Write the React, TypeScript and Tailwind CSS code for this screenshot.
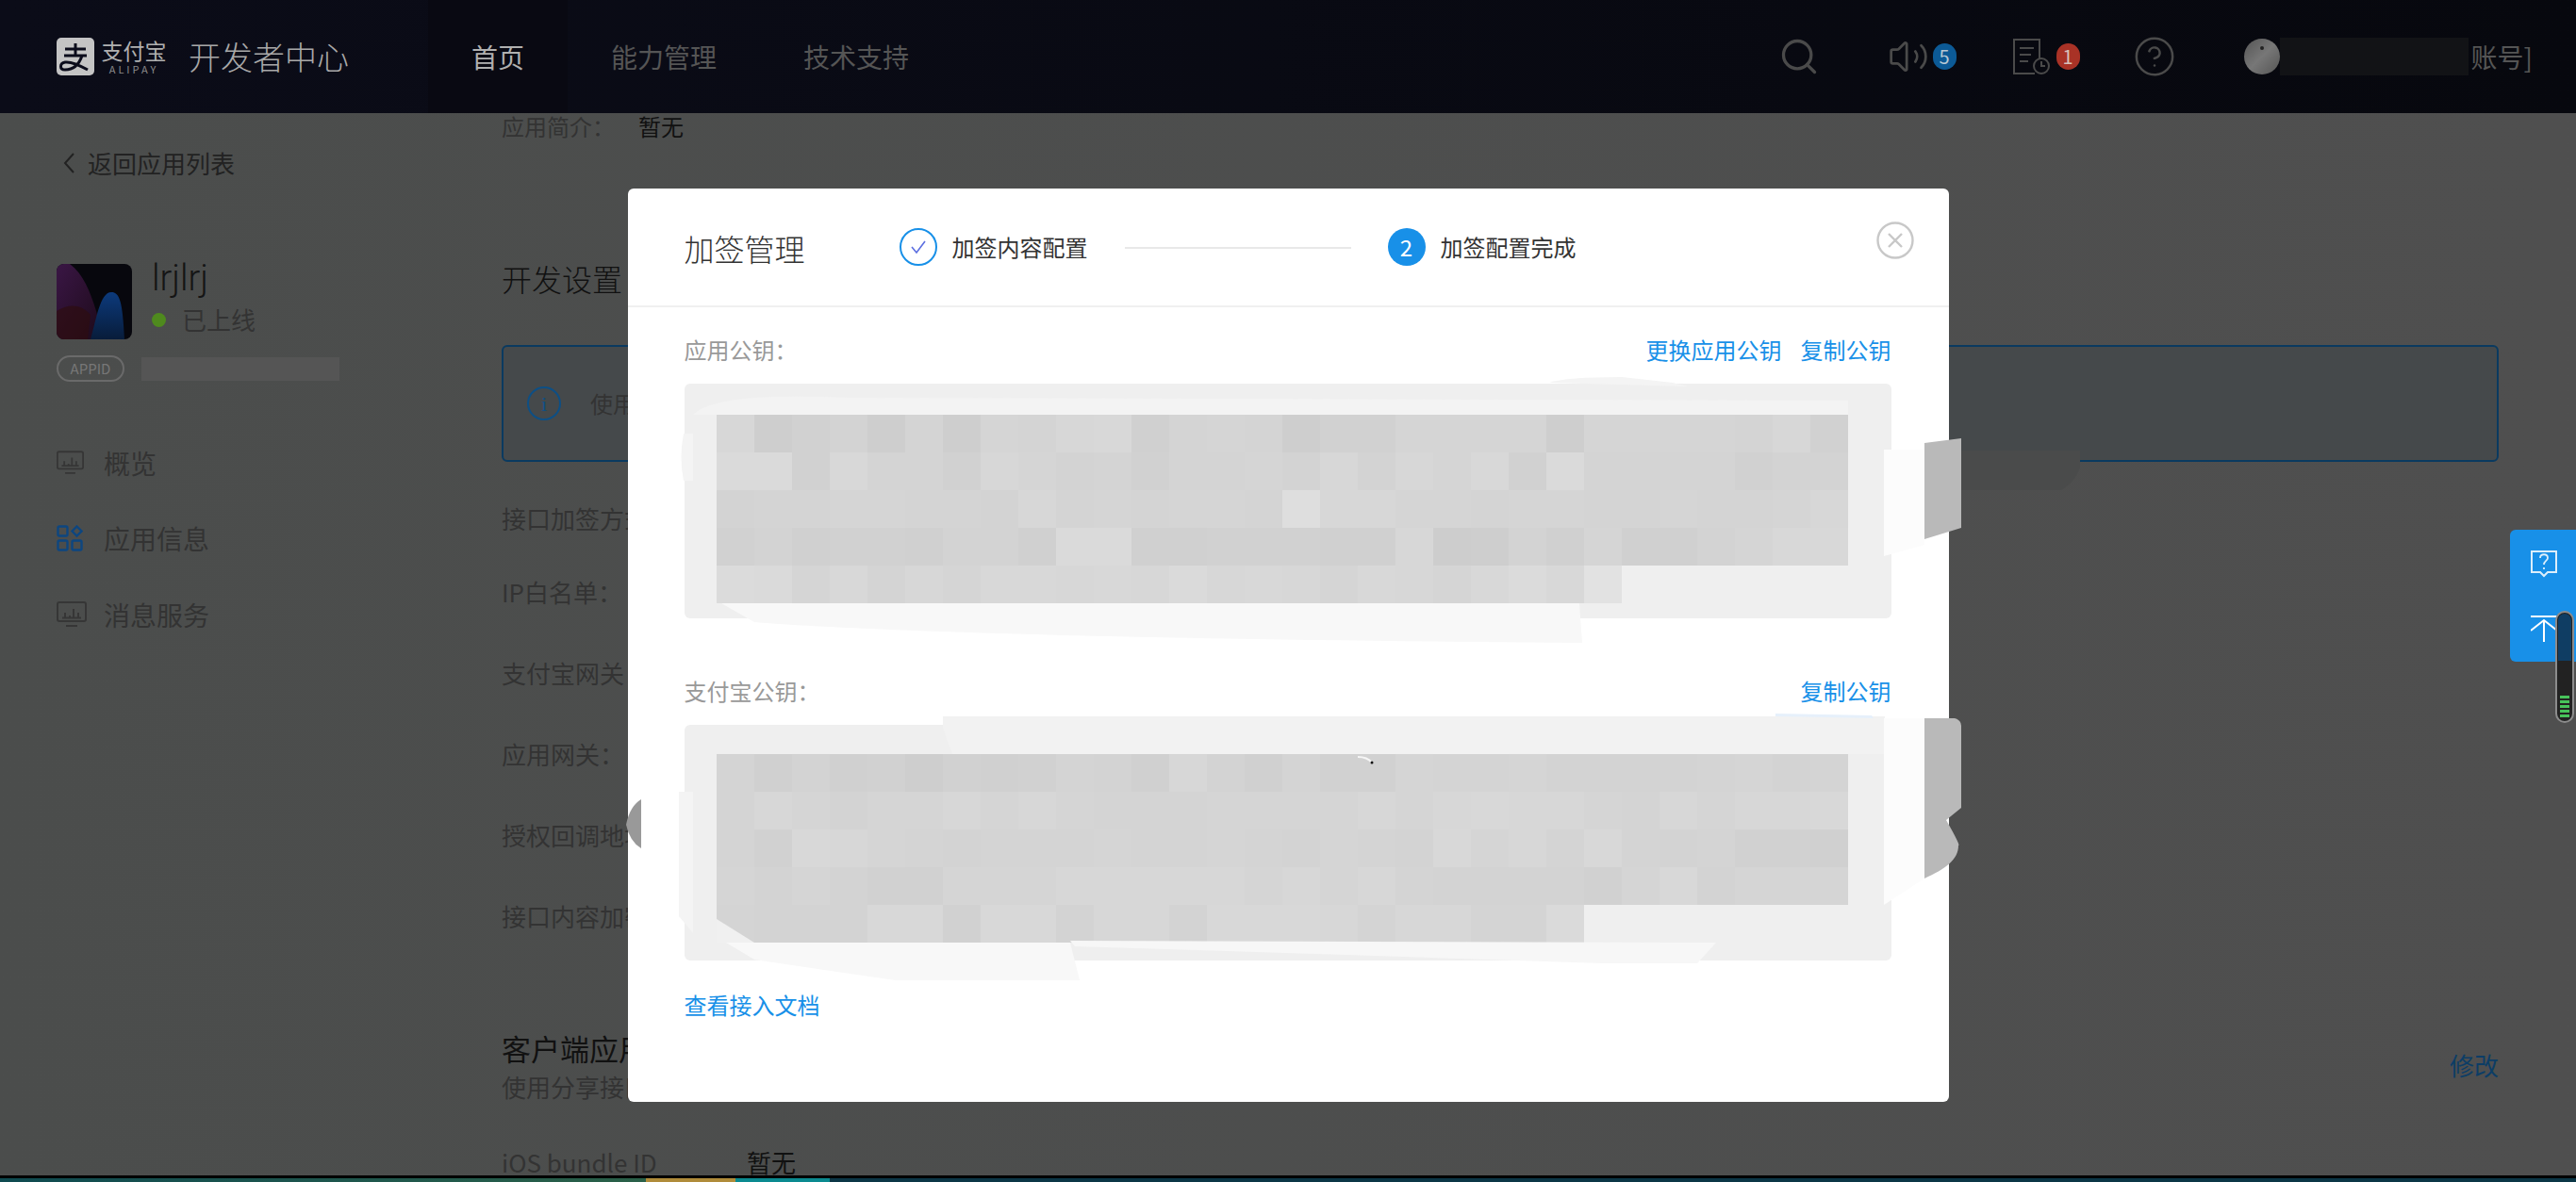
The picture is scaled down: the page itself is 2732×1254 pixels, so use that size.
import { Search, Volume2, CircleHelp } from "lucide-react";

const box1 = [
  "713415165782565133666616666573",
  "993855376453556474768395555344",
  "455665547565665c77665665565567",
  "342332442992233322701426224688",
  "a96857688787978768768a8f",
];
const box2 = [
  "524231323542742533655644445645",
  "576466767655566667678776576778",
  "538765455565565465486758545332",
  "646433666777776767544443684666",
  "54448838847748887577559",
];

function Mosaic({ rows }: { rows: string[] }) {
  return (
    <div className="grid grid-cols-[repeat(30,40px)] auto-rows-[40px]">
      {rows.flatMap((row, r) =>
        row.split("").map((c, i) => {
          const v = Math.round(0xcd + parseInt(c, 16) * 1.4);
          return <div key={r + "-" + i} style={{ backgroundColor: `rgb(${v},${v},${v})` }} />;
        })
      )}
    </div>
  );
}

function PulseIcon({ w, h }: { w: number; h: number }) {
  return (
    <svg width={w} height={h} viewBox="0 0 32 28" fill="none" stroke="#363636" strokeWidth="2">
      <rect x="1" y="1" width="30" height="20" rx="2" />
      <path d="M9 17v-5M14 17v-2M18 17V8M23 17v-5M6 17.5h20M10 26h12" />
    </svg>
  );
}

function Row({ label, className = "" }: { label: string; className?: string }) {
  return <div className={`h-[30px] flex items-center text-[26px] leading-none text-[#333] whitespace-nowrap ${className}`}>{label}</div>;
}

function Step({ n, label }: { n?: number; label: string }) {
  return (
    <div className="flex items-center">
      {n ? (
        <div className="w-10 h-10 rounded-full bg-[#1890e8] text-white text-2xl flex items-center justify-center">{n}</div>
      ) : (
        <div className="w-10 h-10 rounded-full border-2 border-[#1890e8] flex items-center justify-center">
          <svg width="20" height="20" viewBox="0 0 20 20" fill="none" stroke="#5b6ee0" strokeWidth="1.6">
            <path d="M3 10l5 6 9-12" />
          </svg>
        </div>
      )}
      <span className="ml-4 text-2xl text-[#333] leading-none">{label}</span>
    </div>
  );
}

export default function App() {
  return (
    <div className="relative h-screen w-full overflow-hidden flex flex-col bg-gradient-to-r from-[#4b4d4c] to-[#4f4f4f] font-['Noto_Sans_CJK_SC','Liberation_Sans',sans-serif]">
      <header className="relative z-10 h-[120px] shrink-0 flex bg-gradient-to-r from-[#0b0c18] to-[#07080e] pl-[60px]">
        <div className="w-[394px] flex items-center">
          <svg width="40" height="40" viewBox="0 0 40 40" className="shrink-0">
            <rect width="40" height="40" rx="5" fill="#c4c4c4" />
            <path d="M9 12h22M20 6v12M8 19h24M27 19c-3 9-9 15-18 15-6 0-6-7 0-8 7-1 15 3 24 8" fill="none" stroke="#0b0c1b" strokeWidth="3" />
          </svg>
          <div className="ml-[7px] w-[70px] flex flex-col items-center text-[#b0b0b0]">
            <span className="text-[23px] leading-[24px] whitespace-nowrap">支付宝</span>
            <span className="text-[11px] leading-[12px] tracking-[3px] mt-[2px] text-[#8a8a8a]">ALIPAY</span>
          </div>
          <span className="ml-[23px] text-[34px] leading-none text-[#a8a8a8] font-light whitespace-nowrap">开发者中心</span>
        </div>
        <nav className="flex text-[28px]">
          <a className="px-[46px] flex items-center bg-[#090912] text-[#b0b0b0]">首页</a>
          <a className="px-[46px] flex items-center text-[#555]">能力管理</a>
          <a className="px-[46px] flex items-center text-[#555]">技术支持</a>
        </nav>
        <div className="ml-auto pr-[46px] flex items-center text-[#555]">
          <Search size={44} strokeWidth={1.8} className="text-[#4a4a4a]" />
          <Volume2 size={44} strokeWidth={1.5} className="ml-[72px] text-[#4a4a4a]" />
          <span className="ml-[4px] w-[25px] h-[28px] rounded-full bg-[#0c5a96] text-[#b8c8d4] text-[20px] flex items-center justify-center">5</span>
          <svg width="42" height="40" viewBox="0 0 42 40" fill="none" stroke="#4a4a4a" strokeWidth="2" className="ml-[59px]">
            <path d="M24 38H2V2h27v20M8 11h15M8 18h12M8 25h9" />
            <circle cx="31" cy="30" r="8" />
            <path d="M31 25v5h4" />
          </svg>
          <span className="ml-[5px] w-[25px] h-[28px] rounded-full bg-[#a93226] text-[#d8c0b8] text-[20px] flex items-center justify-center">1</span>
          <CircleHelp size={46} strokeWidth={1.3} className="ml-[56px] text-[#4a4a4a]" />
          <div className="ml-[72px] w-[38px] h-[38px] rounded-full bg-gradient-to-br from-[#555] via-[#777] to-[#555] flex items-start justify-center pt-2">
            <div className="w-[4px] h-[4px] rounded-full bg-[#222]" />
          </div>
          <div className="w-[200px] h-10 bg-[#121316]" />
          <span className="ml-[3px] text-[28px] leading-none whitespace-nowrap">账号]</span>
        </div>
      </header>

      <div className="flex-1 min-h-0 flex">
        <aside className="w-[532px] shrink-0 pl-[60px]">
          <div className="mt-[38px] h-[30px] flex items-center text-[26px] leading-none text-[#222]">
            <svg width="14" height="22" viewBox="0 0 14 22" fill="none" stroke="#222" strokeWidth="2" className="ml-[6px]">
              <path d="M12 1L3 11l9 10" />
            </svg>
            <span className="ml-[13px]">返回应用列表</span>
          </div>
          <div className="mt-[92px] flex">
            <svg width="80" height="80" viewBox="0 0 80 80" className="rounded-lg shrink-0">
              <defs>
                <linearGradient id="ap" x1="0" y1="0" x2="1" y2="1">
                  <stop offset="0" stopColor="#3a1645" />
                  <stop offset="1" stopColor="#1c0a18" />
                </linearGradient>
                <linearGradient id="bl" x1="0" y1="0" x2="0" y2="1">
                  <stop offset="0" stopColor="#0c3a7c" />
                  <stop offset="1" stopColor="#081c3a" />
                </linearGradient>
              </defs>
              <rect width="80" height="80" fill="#07070d" />
              <path d="M0 0h14c14 10 22 30 28 50 3 12 6 22 8 30H0z" fill="url(#ap)" />
              <path d="M36 80c6-20 10-50 22-50 9 0 12 10 14 50z" fill="url(#bl)" />
              <path d="M0 50c12-8 26-8 36 4l-3 26H0z" fill="#2e0d10" opacity="0.7" />
            </svg>
            <div className="ml-[21px] -mt-[5px]">
              <div className="text-[38px] leading-[40px] text-[#151515] font-light font-['Roboto',sans-serif]">lrjlrj</div>
              <div className="mt-[11px] flex items-center text-[26px] leading-[26px] text-[#333]">
                <span className="w-[15px] h-[15px] rounded-full bg-[#4f8a1e]" />
                <span className="ml-[17px]">已上线</span>
              </div>
            </div>
          </div>
          <div className="mt-[17px] flex items-center">
            <span className="w-[72px] h-[28px] rounded-full border-2 border-[#6a6a6a] text-[15px] text-[#777] flex items-center justify-center">APPID</span>
            <div className="ml-[18px] w-[210px] h-[25px] bg-[#555]" />
          </div>
          <div className="mt-[71px] h-[30px] flex items-center text-[28px] text-[#333]">
            <span className="w-[50px]"><PulseIcon w={29} h={26} /></span>概览
          </div>
          <div className="mt-[50px] h-[30px] flex items-center text-[28px] text-[#333]">
            <span className="w-[50px]">
              <svg width="28" height="28" viewBox="0 0 28 28" fill="none" stroke="#0d4680" strokeWidth="2.4">
                <rect x="1.5" y="1.5" width="10" height="10" rx="1.5" />
                <rect x="1.5" y="16.5" width="10" height="10" rx="1.5" />
                <rect x="16.5" y="16.5" width="10" height="10" rx="1.5" />
                <path d="M21.5 1.5l5 5-5 5-5-5z" />
              </svg>
            </span>
            应用信息
          </div>
          <div className="mt-[51px] h-[30px] flex items-center text-[28px] text-[#333]">
            <span className="w-[50px]"><PulseIcon w={32} h={28} /></span>消息服务
          </div>
        </aside>

        <main className="flex-1 pr-[82px] flex flex-col">
          <div className="h-[28px] shrink-0 flex items-center text-2xl leading-none whitespace-nowrap">
            <span className="w-[145px] text-[#333]">应用简介：</span>
            <span className="text-[#111]">暂无</span>
          </div>
          <div className="mt-[127px] h-10 flex items-center text-[32px] text-[#111] font-light whitespace-nowrap">开发设置</div>
          <div className="mt-[51px] h-[124px] shrink-0 rounded-md border-2 border-[#0a3a60] bg-[#45494b] pl-[25px] flex items-center">
            <span className="w-9 h-9 rounded-full border-2 border-[#0d4f85] text-[#0d4f85] text-[22px] flex items-center justify-center font-['Liberation_Serif',serif]">i</span>
            <span className="ml-[31px] text-2xl text-[#333] whitespace-nowrap">使用前请先完成配置</span>
          </div>
          <Row label="接口加签方式：" className="mt-[45px]" />
          <Row label="IP白名单：" className="mt-[48px]" />
          <Row label="支付宝网关：" className="mt-[56px]" />
          <Row label="应用网关：" className="mt-[56px]" />
          <Row label="授权回调地址：" className="mt-[56px]" />
          <Row label="接口内容加密：" className="mt-[56px]" />
          <div className="mt-[105px] h-10 flex items-center text-[31px] text-[#111] whitespace-nowrap">
            <span>客户端应用</span>
          </div>
          <div className="mt-[6px] h-[30px] flex items-center justify-between text-[26px] leading-none whitespace-nowrap">
            <span className="text-[#333]">使用分享接口</span>
            <span className="text-[#0c3d66] -mt-[46px]">修改</span>
          </div>
          <div className="mt-[51px] h-[28px] shrink-0 flex items-center text-[26px] leading-none whitespace-nowrap">
            <span className="w-[260px] text-[#333]">iOS bundle ID</span>
            <span className="text-[#111]">暂无</span>
          </div>
        </main>
      </div>

      <div className="h-[7px] shrink-0 border-t-[3px] border-black flex relative z-10">
        <div className="w-[685px] bg-gradient-to-r from-[#0e4a50] to-[#2a6048]" />
        <div className="w-[95px] bg-[#b08c3a]" />
        <div className="w-[100px] bg-[#0a8a90]" />
        <div className="flex-1 bg-[#0b3646]" />
      </div>

      <div className="absolute z-20 inset-0 flex items-start justify-center pt-[200px]">
        <div className="relative w-[1401px] h-[969px] bg-white rounded-md">
          <div className="h-[126px] border-b-2 border-[#f0f0f0] pl-[60px] pt-[42px] flex items-start">
            <span className="mt-[1px] w-[228px] text-[32px] leading-10 text-[#333] font-light">加签管理</span>
            <Step label="加签内容配置" />
            <div className="mx-[39px] mt-[20px] w-[240px] h-[2px] bg-[#e8e8e8]" />
            <Step n={2} label="加签配置完成" />
          </div>
          <svg width="40" height="40" viewBox="0 0 40 40" fill="none" stroke="#c8c8c8" strokeWidth="2.4" className="absolute right-[37px] top-[35px]">
            <circle cx="20" cy="20" r="18.5" />
            <path d="M13 13l14 14M27 13L13 27" />
          </svg>
          <div className="pr-[61px] pl-[60px]">
            <div className="mt-[30px] h-[30px] flex items-center justify-between text-2xl">
              <span className="text-[#999]">应用公钥：</span>
              <span className="flex gap-5 text-[#1890e8]">
                <a>更换应用公钥</a>
                <a>复制公钥</a>
              </span>
            </div>
            <div className="mt-[21px] h-[249px] rounded-md bg-[#efefef] pl-[34px] pt-[33px]">
              <Mosaic rows={box1} />
            </div>
            <div className="mt-[62px] h-[30px] flex items-center justify-between text-2xl">
              <span className="text-[#999]">支付宝公钥：</span>
              <a className="text-[#1890e8]">复制公钥</a>
            </div>
            <div className="mt-[21px] h-[250px] rounded-md bg-[#efefef] pl-[34px] pt-[31px]">
              <Mosaic rows={box2} />
            </div>
            <a className="block mt-[32px] h-[30px] leading-[30px] text-2xl text-[#1890e8]">查看接入文档</a>
          </div>
        </div>
      </div>

      {/* smudges left by the redaction, in page coordinates */}
      <svg className="absolute z-20 inset-0 pointer-events-none" width="2732" height="1254" viewBox="0 0 2732 1254">
        <path d="M1643 406q17-6 77-6l54 6 16 4z" fill="#f4f4f4" />
        <path d="M735 440q25-25 165-18l1060 3v15z" fill="#f3f3f3" />
        <path d="M725 460q-5 25 0 50h10v-50z" fill="#f4f4f4" />
        <path d="M765 640h910l3 42q-478-4-678-12-140-5-200-10z" fill="#f8f8f8" />
        <path d="M1998 477h43v101l-43 12z" fill="#fcfcfc" />
        <path d="M2080 478h126v18q-5 15-20 24h-106z" fill="#4a4b4b" />
        <path d="M2041 470l39-5v95l-39 12z" fill="#b9b9b9" />
        <path d="M1000 772v-12h999v40H1010z" fill="#f2f2f2" />
        <path d="M1883 760v-3l102 2 2 3z" fill="#e6f0fb" />
        <path d="M725 840h-5v132l15 18V840z" fill="#f4f4f4" />
        <path d="M760 975l40 25h-40z" fill="#f0f0f0" />
        <path d="M770 1000h365l10 40H950q-70-10-150-22z" fill="#f8f8f8" />
        <path d="M1135 998l685 2-20 22h-100q-300-10-560-18z" fill="#f7f7f7" />
        <path d="M1998 762h43v170l-43 28z" fill="#fcfcfc" />
        <path d="M2041 762h32q7 2 7 8v87l-16 13q16 28 13 27c0 15-14 25-36 35z" fill="#b9b9b9" />
        <path d="M664 875q4-20 16-27v52q-12-7-16-25z" fill="#999" />
        <path d="M1440 803q10 0 15 6" fill="none" stroke="#f6f6f6" strokeWidth="2" />
        <circle cx="1455" cy="809" r="1.5" fill="#111" />
      </svg>

      <div className="absolute z-20 right-0 top-[562px] w-[70px] h-[140px] rounded-l-md bg-[#1890e8] flex flex-col items-start pl-[22px]">
        <svg width="28" height="29" viewBox="0 0 28 29" fill="none" stroke="#fff" strokeWidth="2" className="mt-[22px] opacity-85">
          <path d="M1 1h26v22h-9l-4 4-4-4H1z" />
          <path d="M10 8c0-5 8-5 8 0 0 3-4 3-4 7M14 18v2" strokeWidth="1.8" />
        </svg>
        <svg width="28" height="28" viewBox="0 0 28 28" fill="none" stroke="#fff" strokeWidth="2" className="mt-[40px]">
          <path d="M0 1h28M0 16L14 5l14 11M14 5v23" />
        </svg>
      </div>
      <div className="absolute z-20 right-[2px] top-[648px] w-5 h-[119px] rounded-full border-2 border-[#8c8c8c] bg-[#222] p-[2px] flex flex-col justify-end gap-[2px] pb-1">
        <div className="absolute left-[1px] right-[1px] top-[1px] h-[50px] rounded-t-full bg-[#0f3d63]" />
        <div className="h-[3px] mx-[1px] bg-[#47c35a]" />
        <div className="h-[3px] mx-[1px] bg-[#47c35a]" />
        <div className="h-[3px] mx-[1px] bg-[#47c35a]" />
        <div className="h-[3px] mx-[1px] bg-[#47c35a]" />
        <div className="h-[3px] mx-[1px] bg-[#47c35a]" />
      </div>
    </div>
  );
}
